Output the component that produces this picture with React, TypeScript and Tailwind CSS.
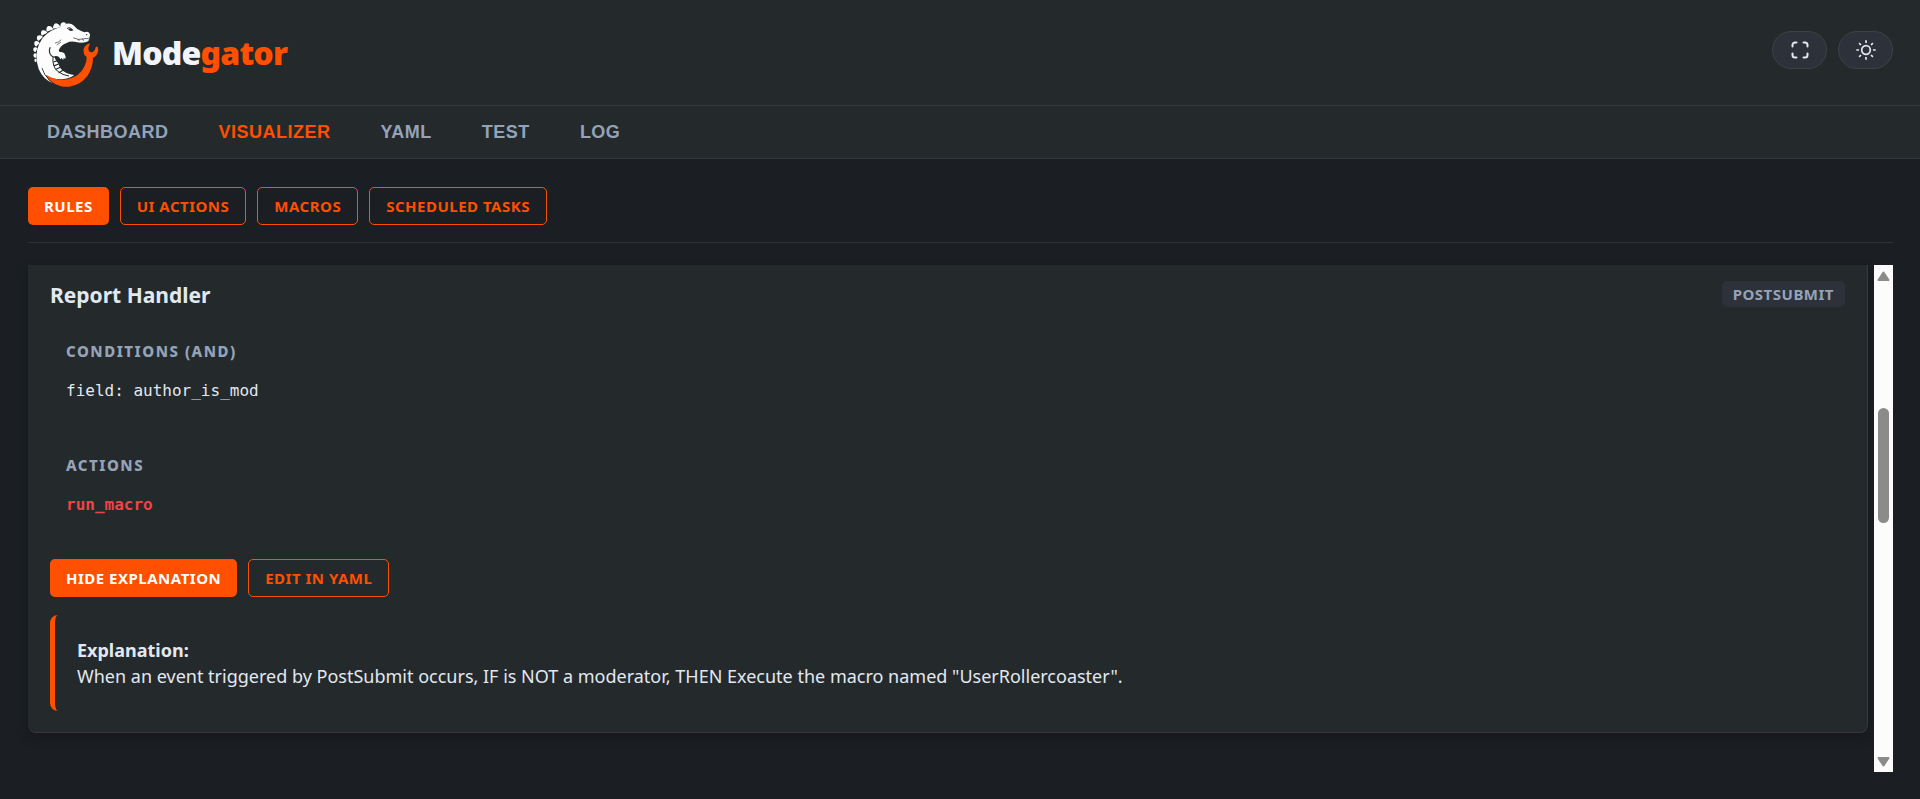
import type { ReactNode } from "react";

const TABS = ["Dashboard", "Visualizer", "YAML", "Test", "Log"];
const SECTIONS = ["Rules", "UI Actions", "Macros", "Scheduled Tasks"];

function Logo() {
  return (
    <svg viewBox="0 0 225 225" className="size-[75px] shrink-0" aria-hidden="true">
      <g fill="#fdfdfd">
        <path d="M75 41 Q75 27 84 25 Q94 27 97 37 Z" />
        <path d="M56 50 Q53 37 61 33 Q71 32 76 43 Z" />
        <path d="M41 62 Q36 52 43 46 Q53 44 58 53 Z" />
        <path d="M31 78 Q23 69 29 62 Q39 58 45 66 Z" />
        <path d="M24 95 Q15 88 21 79 Q30 76 35 84 Z" />
        <path d="M22 112 Q13 107 17 98 Q24 94 29 100 Z" />
        <path d="M23 129 Q14 126 17 117 Q21 112 26 117 Z" />
        <path d="M25 142 Q18 141 19 134 Q22 129 26 133 Z" />
        <path d="M97 36 Q96 24 105 22 Q111 21 114 26 Q130 23 138 32 Q146 43 160 48 Q166 51 170 52 Q178 48 184 54 Q189 61 184 68 Q185 78 174 81 Q160 85 144 81 Q128 77 116 84 Q101 89 94 102 Q90 108 96 111 Q108 110 111 119 Q114 124 112 132 L107 128 L106 135 L101 129 L97 133 Q93 123 84 123 L80 124 Q80 132 86 139 Q92 145 94 154 Q98 164 107 169 Q120 179 139 180 Q123 191 102 193 Q74 194 53 180 Q58 195 75 205 Q45 193 32 162 Q18 122 33 88 Q45 61 70 47 Q83 41 97 36 Z" />
      </g>
      <g fill="none" stroke="#24292c" strokeLinecap="round" strokeLinejoin="round">
        <path d="M66 98 Q61 113 70 122 Q75 127 82 126" strokeWidth="3.500" />
        <path d="M75 128 Q72 153 88 168 Q104 181 122 183" strokeWidth="3" />
        <path d="M77 141 L87 137 M79 152 L92 147 M84 163 L97 157 M93 173 L105 166" strokeWidth="3.500" />
        <path d="M82 84 Q91 83 99 75 M87 89 L98 82" strokeWidth="1.800" />
        <path d="M42 160 Q47 181 67 197" strokeWidth="2.500" />
        <path d="M137 69 Q151 76 165 72 Q173 69 182 71 M151 73 L153 77 M164 72 L166 76" strokeWidth="2" />
        <path d="M118 40 Q126 34 134 45" strokeWidth="3" />
      </g>
      <path d="M120 42 Q130 37 135 46 Q126 51 120 42 Z" fill="#24292c" />
      <circle cx="176" cy="59" r="2" fill="#24292c" />
      <path
        d="M54 179 Q85 199 119 193 Q155 185 170 153 Q177 139 176 126 Q164 117 167 102 Q171 90 185 85 Q186 91 181 98 Q180 108 188 112 Q197 112 201 104 Q201 97 208 94 Q214 108 206 119 Q201 126 195 128 Q195 157 178 183 Q158 210 124 215 Q76 218 54 179 Z"
        fill="#ff4f00"
      />
    </svg>
  );
}

function RoundButton({ label, children }: { label: string; children: ReactNode }) {
  return (
    <button
      type="button"
      aria-label={label}
      className="flex h-[38px] w-[55px] items-center justify-center rounded-full border border-[#3d4247] bg-[#2d3139] text-[#e2e8f0]"
    >
      {children}
    </button>
  );
}

function ActionButton({ active = false, children }: { active?: boolean; children: ReactNode }) {
  const base = "rounded-[5px] px-4 py-2 text-[15px] leading-5 font-bold tracking-[0.5px] uppercase";
  return (
    <button
      type="button"
      aria-pressed={active}
      className={
        active ? `${base} bg-[#ff4f00] text-white` : `${base} border border-[#ff4f00] text-[#ff4f00]`
      }
    >
      {children}
    </button>
  );
}

function Rail() {
  return (
    <div aria-hidden="true" className="flex w-[19px] shrink-0 flex-col items-center bg-[#fcfcfc]">
      <svg viewBox="0 0 19 19" className="size-[19px] shrink-0" fill="#8b8b8b" stroke="#8b8b8b" strokeWidth="2" strokeLinejoin="round">
        <path d="M9.500 7.500 L14.500 15 H4.500 Z" />
      </svg>
      <div className="grow-[124]" />
      <div className="w-[11px] grow-[115] rounded-full bg-[#8b8b8b]" />
      <div className="grow-[230]" />
      <svg viewBox="0 0 19 19" className="size-[19px] shrink-0" fill="#8b8b8b" stroke="#8b8b8b" strokeWidth="2" strokeLinejoin="round">
        <path d="M9.500 12.500 L14.500 5 H4.500 Z" />
      </svg>
    </div>
  );
}

export default function App() {
  return (
    <div className="flex h-screen flex-col bg-[#1b1e23] font-['Noto_Sans','Open_Sans',sans-serif] text-lg text-[#e2e8f0]">
      <header className="flex items-center justify-between border-b border-[#353a3f] bg-[#24292c] py-[15px] pr-[27px] pl-7">
        <div className="flex items-center gap-[9px]">
          <Logo />
          <h1 className="text-[32px] leading-10 font-black tracking-tight text-[#f1f5f9]">
            Mode<span className="text-[#ff4f00]">gator</span>
          </h1>
        </div>
        <div className="mt-4 flex gap-[11px] self-start">
          <RoundButton label="Full screen">
            <svg viewBox="0 0 18 18" className="size-[18px]" fill="none" stroke="currentColor" strokeWidth="2" strokeLinecap="round">
              <path d="M1.500 5.500 V4 A2.500 2.500 0 0 1 4 1.500 H5.500 M12.500 1.500 H14 A2.500 2.500 0 0 1 16.500 4 V5.500 M16.500 12.500 V14 A2.500 2.500 0 0 1 14 16.500 H12.500 M5.500 16.500 H4 A2.500 2.500 0 0 1 1.500 14 V12.500" />
            </svg>
          </RoundButton>
          <RoundButton label="Toggle theme">
            <svg viewBox="0 0 20 20" className="size-5" fill="none" stroke="currentColor" strokeWidth="1.700">
              <circle cx="10" cy="10" r="4.300" />
              <path d="M10 0.300 V3 M10 17 V19.700 M0.300 10 H3 M17 10 H19.700 M3.100 3.100 L5 5 M15 15 L16.900 16.900 M3.100 16.900 L5 15 M15 5 L16.900 3.100" />
            </svg>
          </RoundButton>
        </div>
      </header>

      <nav className="flex gap-0.5 border-b border-[#353a3f] bg-[#24292c] px-[23px] font-['Liberation_Sans',Arial,sans-serif]">
        {TABS.map((tab) => (
          <button
            key={tab}
            type="button"
            className={
              tab === "Visualizer"
                ? "px-6 py-3 text-lg leading-7 font-bold tracking-[0.5px] text-[#ff4f00] uppercase"
                : "px-6 py-3 text-lg leading-7 font-bold tracking-[0.5px] text-[#94a3b8] uppercase"
            }
          >
            {tab}
          </button>
        ))}
      </nav>

      <main className="flex min-h-0 flex-1 flex-col pt-7 pr-[27px] pb-[27px] pl-7">
        <div className="mb-[22px] flex flex-wrap gap-[11px] border-b border-[#2e3236] pb-[17px]">
          {SECTIONS.map((s) => (
            <ActionButton key={s} active={s === "Rules"}>
              {s}
            </ActionButton>
          ))}
        </div>

        <div className="flex min-h-0 flex-1 gap-1.5">
          <div className="min-w-0 flex-1">
            <article className="rounded-b-lg border-r border-b border-[#353a3f] bg-[#24292c] px-[22px] pt-4 pb-[21px] shadow-[0_4px_12px_rgba(0,0,0,0.25)]">
              <div className="flex items-start justify-between">
                <h2 className="text-[21px] leading-7 font-bold">Report Handler</h2>
                <span className="rounded-[5px] bg-[#2d3139] px-[11px] py-[3px] text-[15px] leading-5 font-bold tracking-[0.5px] text-[#94a3b8] uppercase">
                  PostSubmit
                </span>
              </div>

              <section className="mt-8 px-4">
                <h3 className="text-[15px] leading-5 font-extrabold tracking-widest text-[#94a3b8] uppercase">
                  Conditions (AND)
                </h3>
                <p className="mt-[18px] font-['DejaVu_Sans_Mono',monospace] text-base leading-6">field: author_is_mod</p>
              </section>

              <section className="mt-[52px] px-4">
                <h3 className="text-[15px] leading-5 font-extrabold tracking-widest text-[#94a3b8] uppercase">
                  Actions
                </h3>
                <p className="mt-[18px] font-['DejaVu_Sans_Mono',monospace] text-base leading-6 font-bold text-[#ef4444]">run_macro</p>
              </section>

              <div className="mt-[42px] flex gap-[11px]">
                <ActionButton active>Hide Explanation</ActionButton>
                <ActionButton>Edit in YAML</ActionButton>
              </div>

              <div className="mt-[18px] rounded-lg border-l-[5px] border-[#ff4f00] px-[22px] py-[22px] leading-[26px]">
                <strong className="block font-bold">Explanation:</strong>
                <p>
                  When an event triggered by PostSubmit occurs, IF is NOT a moderator, THEN Execute the macro named
                  "UserRollercoaster".
                </p>
              </div>
            </article>
          </div>
          <Rail />
        </div>
      </main>
    </div>
  );
}
